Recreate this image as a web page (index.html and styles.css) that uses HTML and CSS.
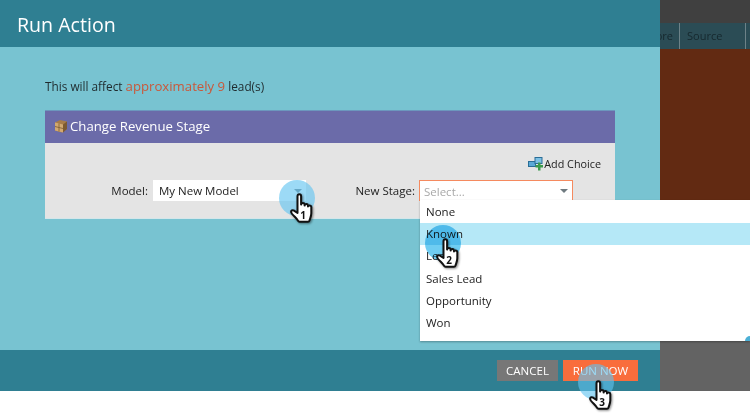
FILE: index.html
```html
<!DOCTYPE html>
<html lang="en">
<head>
<meta charset="utf-8">
<title>Run Action</title>
<link rel="stylesheet" href="styles.css">
</head>
<body>
<svg class="defs" width="0" height="0" aria-hidden="true">
  <defs>
    <symbol id="hand" viewBox="0 0 24 31">
      <path d="M7.500 3.200c0-2.600 3.600-2.600 3.600 0v8.300c.3-2 3.300-2 3.500 0v1c.3-1.900 3.200-1.900 3.400 .1v1c.4-1.700 3.200-1.600 3.300 .4v6.300c0 2.800-1 4.600-1.800 7.200-.2.800-.8 1.300-1.600 1.300H9.600c-.8 0-1.300-.4-1.600-1.100C6.800 25.400 4.200 23.500 1.800 20.500c-1.500-2-.2-3.900 1.800-3.100l3.900 2.600z" fill="#fff" stroke="#111" stroke-width="2" stroke-linejoin="round"/>
    </symbol>
  </defs>
</svg>
<div class="stage">
  <main class="modal">
    <header class="modal-head"><h1>Run Action</h1></header>
    <section class="modal-body">
      <p class="affect">This will affect <span class="approx">approximately 9</span> lead(s)</p>
      <div class="panel">
        <div class="panel-head">
          <svg class="box-icon" viewBox="0 0 14 14" width="14" height="14" aria-hidden="true">
            <path d="M1 3.500l5-2.500 7 1.500V10l-5 3.500-7-2z" fill="#a87c48"/>
            <path d="M9 5.500l4-3V10l-4 3.500z" fill="#7d5a30"/>
            <path d="M1 3.500l8 2v8l-8-2z" fill="#d3a970"/>
            <path d="M5 4.500v8M1 7.500l8 2" stroke="#7b5a30" stroke-width=".8" fill="none"/>
          </svg>
          <span>Change Revenue Stage</span>
        </div>
        <div class="panel-body">
          <div class="add-row">
            <svg class="add-icon" viewBox="0 0 15 14" width="15" height="14" aria-hidden="true">
              <rect x=".5" y="4.500" width="7" height="5" fill="#5aa9d6" stroke="#2a6d96"/>
              <rect x="7" y=".5" width="7" height="6" fill="#7cc0e4" stroke="#2a6d96"/>
              <path d="M7.500 8h2.500V5.500h2.500V8H15v2.500h-2.500V13.500H10V10.500H7.500z" fill="#3c9a4c"/>
            </svg>
            <span>Add Choice</span>
          </div>
          <div class="fields">
            <label class="label model-label">Model:</label>
            <div class="select model-select"><span>My New Model</span><i class="arrow"></i></div>
            <label class="label stage-label">New Stage:</label>
            <div class="select stage-select"><span>Select...</span><i class="arrow"></i></div>
          </div>
        </div>
      </div>
    </section>
    <footer class="modal-foot">
      <button class="btn cancel">CANCEL</button>
      <button class="btn run">RUN NOW</button>
    </footer>
  </main>
  <aside class="behind">
    <div class="behind-top"></div>
    <div class="behind-cols"><span class="col col-a"><span class="col-clip">ore</span></span><span class="col col-b">Source</span></div>
    <div class="behind-brown"></div>
    <div class="behind-gray"></div>
  </aside>

  <ul class="menu">
    <li>None</li>
    <li class="active">Known</li>
    <li>Lead</li>
    <li>Sales Lead</li>
    <li>Opportunity</li>
    <li>Won</li>
    <li class="menu-corner"></li>
  </ul>

  <div class="pointer p1"><i class="halo"></i><svg class="hand"><use href="#hand"/></svg><b>1</b></div>
  <div class="pointer p2"><i class="halo"></i><svg class="hand"><use href="#hand"/></svg><b>2</b></div>
  <div class="pointer p3"><i class="halo"></i><svg class="hand"><use href="#hand"/></svg><b>3</b></div>
</div>
</body>
</html>
```
FILE: styles.css
```css
* { box-sizing: border-box; }
html, body { margin: 0; padding: 0; background: #fff; }
body { width: 750px; height: 418px; overflow: hidden; font-family: "Open Sans", "Liberation Sans", sans-serif; color: #222; }
.defs { position: absolute; }
.stage { position: relative; display: flex; width: 750px; height: 391px; }

.modal { width: 660px; display: flex; flex-direction: column; background: #78c3d1; }
.modal-head { height: 47px; background: #2f7f92; display: flex; align-items: center; padding: 2px 0 0 17px; }
.modal-head h1 { margin: 0; font-size: 19.600px; font-weight: 400; color: #fff; }
.modal-body { flex: 1; padding: 30px 45px 0; }
.affect { margin: 0 0 15px; height: 18px; line-height: 18px; font-size: 11.800px; color: #1f2a2d; }
.approx { color: #c9583a; font-size: 13.200px; }

.panel { width: 570px; }
.panel-head { height: 33px; background: #6b6ba9; display: flex; align-items: center; padding: 0 0 2px 9px; gap: 2px; color: #fff; font-size: 13.200px; border-top: 1px solid #6c97bd; }
.box-icon { flex: none; }
.panel-body { height: 76px; background: #e4e4e4; padding-top: 13px; border-bottom: 1px solid #d4e6ea; }
.add-row { height: 15px; display: flex; justify-content: flex-end; align-items: center; padding-right: 14px; font-size: 10.800px; color: #222; }
.add-icon { flex: none; margin-right: 1px; }
.fields { display: flex; align-items: center; margin-top: 9px; height: 21px; font-size: 11.500px; }
.label { text-align: right; color: #222; }
.model-label { width: 103px; }
.stage-label { width: 109px; }
.select { position: relative; height: 21px; background: #fff; display: flex; align-items: center; margin-left: 5px; padding-left: 6px; }
.model-select { width: 153px; color: #222; }
.stage-select { width: 154px; margin-left: 4px; padding-left: 4px; color: #a8a8a8; border: 1px solid #f58a5f; border-bottom: 0; }
.arrow { position: absolute; right: 4px; top: 9px; width: 0; height: 0; border-left: 4px solid transparent; border-right: 4px solid transparent; border-top: 4px solid #6f7a80; }
.stage-select .arrow { right: 4px; top: 8px; }

.modal-foot { height: 41px; background: #2f7f92; display: flex; justify-content: flex-end; gap: 5px; padding: 10px 22px 0 0; }
.btn { height: 21px; border: 0; padding: 0; font-family: inherit; font-size: 11.500px; color: #fff; display: block; }
.cancel { width: 61px; background: #777; }
.run { width: 75px; background: #f96d3c; }

.behind { flex: 1; display: flex; flex-direction: column; background: #636363; }
.behind-top { height: 23px; background: #404040; }
.behind-cols { height: 26px; background: #2b4c55; font-size: 11px; color: #16282e; display: flex; align-items: center; }
.col { display: block; height: 100%; line-height: 25px; border-right: 1px solid #6d8288; }
.col-a { width: 20px; overflow: hidden; text-align: right; padding-right: 6px; }
.col-clip { display: inline-block; width: 13px; overflow: hidden; direction: rtl; }
.col-b { width: 66px; padding-left: 7px; }
.behind-brown { height: 152px; background: #622a12; }
.behind-gray { flex: 1; }

.menu { position: absolute; left: 420px; top: 200px; width: 330px; height: 141px; margin: 0; padding: 1px 0 0; list-style: none; background: #fff; font-size: 11.500px; color: #222; box-shadow: 0 1px 2px rgba(0,0,0,.3); overflow: hidden; }
.menu li { height: 22.200px; line-height: 22px; padding-left: 6px; }
.menu li.active { background: #b5e8f7; }
.menu li.menu-corner { position: absolute; right: -5px; bottom: -5px; width: 10px; height: 10px; padding: 0; border-radius: 50%; background: #4bb0d6; }

.pointer { position: absolute; width: 36px; height: 36px; }
.halo { position: absolute; inset: 0; border-radius: 50%; background: rgba(96,196,240,.62); }
.hand { position: absolute; left: 11px; top: 13px; width: 24px; height: 31px; filter: drop-shadow(1px 1px 1px rgba(0,0,0,.45)); }
.pointer b { position: absolute; left: 20px; top: 30px; font: 700 10px/10px "Open Sans", sans-serif; color: #111; width: 8px; text-align: center; }
.p1 { left: 279px; top: 180px; }
.p2 { left: 425px; top: 225px; }
.p2 .halo { background: #6fcdf2; mix-blend-mode: multiply; }
.p3 { left: 578px; top: 364px; }
.p3 .hand { top: 16px; }
.p3 b { top: 33px; }
```
